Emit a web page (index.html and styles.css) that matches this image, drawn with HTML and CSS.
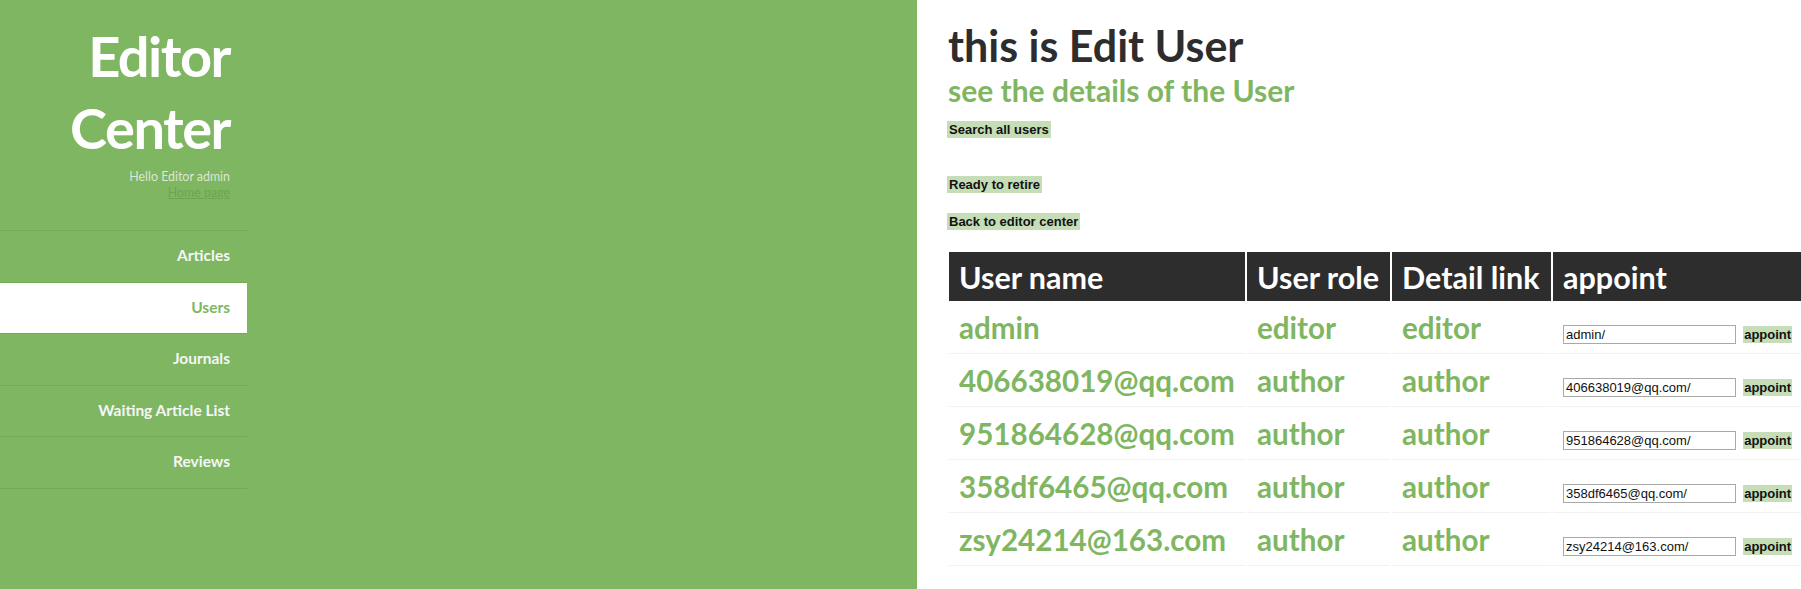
FILE: index.html
```html
<!DOCTYPE html>
<html lang="en">
<head>
<meta charset="utf-8">
<title>Edit User</title>
<link rel="stylesheet" href="styles.css">
</head>
<body>
<div class="page">
  <aside class="sidebar">
    <div class="side-col">
      <header class="brand">
        <h1 class="brand-title">Editor<br>Center</h1>
        <p class="brand-hello">Hello Editor admin</p>
        <a class="brand-home" href="#">Home page</a>
      </header>
      <ul class="nav">
        <li class="nav-item"><a href="#">Articles</a></li>
        <li class="nav-item active"><a href="#">Users</a></li>
        <li class="nav-item"><a href="#">Journals</a></li>
        <li class="nav-item"><a href="#">Waiting Article List</a></li>
        <li class="nav-item"><a href="#">Reviews</a></li>
      </ul>
    </div>
  </aside>
  <main class="main">
    <h1 class="title">this is Edit User</h1>
    <h2 class="subtitle">see the details of the User</h2>
    <div class="action first"><button class="btn">Search all users</button></div>
    <div class="action retire"><button class="btn">Ready to retire</button></div>
    <div class="action back"><button class="btn">Back to editor center</button></div>
    <table class="users">
      <colgroup>
        <col class="c1"><col class="c2"><col class="c3"><col class="c4">
      </colgroup>
      <thead>
        <tr><th>User name</th><th>User role</th><th>Detail link</th><th>appoint</th></tr>
      </thead>
      <tbody>
        <tr><td>admin</td><td>editor</td><td>editor</td><td><input class="field" type="text" value="admin/"> <button class="btn small">appoint</button></td></tr>
        <tr><td>406638019@qq.com</td><td>author</td><td>author</td><td><input class="field" type="text" value="406638019@qq.com/"> <button class="btn small">appoint</button></td></tr>
        <tr><td>951864628@qq.com</td><td>author</td><td>author</td><td><input class="field" type="text" value="951864628@qq.com/"> <button class="btn small">appoint</button></td></tr>
        <tr><td>358df6465@qq.com</td><td>author</td><td>author</td><td><input class="field" type="text" value="358df6465@qq.com/"> <button class="btn small">appoint</button></td></tr>
        <tr><td>zsy24214@163.com</td><td>author</td><td>author</td><td><input class="field" type="text" value="zsy24214@163.com/"> <button class="btn small">appoint</button></td></tr>
      </tbody>
    </table>
  </main>
</div>
</body>
</html>
```
FILE: styles.css
```css
html, body {
  margin: 0;
  padding: 0;
  overflow: hidden;
  background: #ffffff;
}
body {
  font-family: "Lato", "Liberation Sans", sans-serif;
}
.page {
  display: flex;
  min-height: 589px;
  width: 1801px;
}
.sidebar {
  flex: 0 0 917px;
  background: #7fb662;
}
.side-col {
  width: 247px;
}
.brand {
  text-align: right;
  padding: 20px 17px 0 0;
}
.brand-title {
  margin: 0;
  font-size: 56px;
  line-height: 72px;
  font-weight: 700;
  color: #ffffff;
  letter-spacing: -1.5px;
}
.brand-hello {
  margin: 5px 0 0;
  font-size: 12.4px;
  line-height: 16px;
  color: #dbe6d3;
}
.brand-home {
  display: block;
  font-size: 12.4px;
  line-height: 16px;
  color: #6ca450;
  text-decoration: underline;
}
.nav {
  list-style: none;
  margin: 29px 0 0;
  padding: 0;
  border-top: 1px solid #72aa56;
}
.nav-item {
  height: 50.6px;
  border-bottom: 1px solid #72aa56;
  text-align: right;
}
.nav-item a {
  display: block;
  padding-right: 17px;
  font-size: 15.5px;
  font-weight: 700;
  line-height: 49px;
  color: #f4f6f8;
  text-decoration: none;
}
.nav-item.active {
  background: #ffffff;
}
.nav-item.active a {
  color: #7fb662;
}
.main {
  flex: 1 1 auto;
  padding: 24px 0 0 30px;
  min-width: 0;
}
.title {
  margin: 0 0 0 1px;
  font-size: 43px;
  line-height: 44px;
  font-weight: 700;
  color: #2d2d2d;
}
.subtitle {
  margin: 5px 0 0 1px;
  font-size: 30px;
  line-height: 34px;
  font-weight: 700;
  color: #7fb662;
}
.action {
  line-height: 0;
}
.action.first { margin-top: 14px; }
.action.retire { margin-top: 38px; }
.action.back { margin-top: 20px; }
.btn {
  font-family: "Liberation Sans", Arial, sans-serif;
  font-size: 13px;
  font-weight: 700;
  line-height: 15px;
  padding: 1px 2px;
  margin: 0;
  border: 0;
  background: #c5deb7;
  color: #111111;
}
.btn.small {
  padding: 1px 1px;
}
.users {
  margin-top: 20px;
  border-collapse: separate;
  border-spacing: 2px;
  table-layout: fixed;
  width: 856px;
}
.c1 { width: 296px; }
.c2 { width: 143px; }
.c3 { width: 159px; }
.c4 { width: 248px; }
.users th {
  background: #2d2d2d;
  color: #ffffff;
  font-size: 30.5px;
  font-weight: 700;
  text-align: left;
  height: 49px;
  padding: 0 10px;
  line-height: 34px;
  vertical-align: middle;
  white-space: nowrap;
}
.users td {
  height: 50px;
  padding: 0 10px;
  border-bottom: 1px solid #f1f1f1;
  font-size: 29.6px;
  font-weight: 700;
  line-height: 36px;
  color: #7fb662;
  vertical-align: middle;
  white-space: nowrap;
}
.field {
  box-sizing: border-box;
  width: 173px;
  height: 19px;
  margin: 0;
  padding: 1px 2px;
  border: 1px solid #a9a9a9;
  font-family: "Liberation Sans", Arial, sans-serif;
  font-size: 13px;
  color: #111111;
  vertical-align: baseline;
}
```
